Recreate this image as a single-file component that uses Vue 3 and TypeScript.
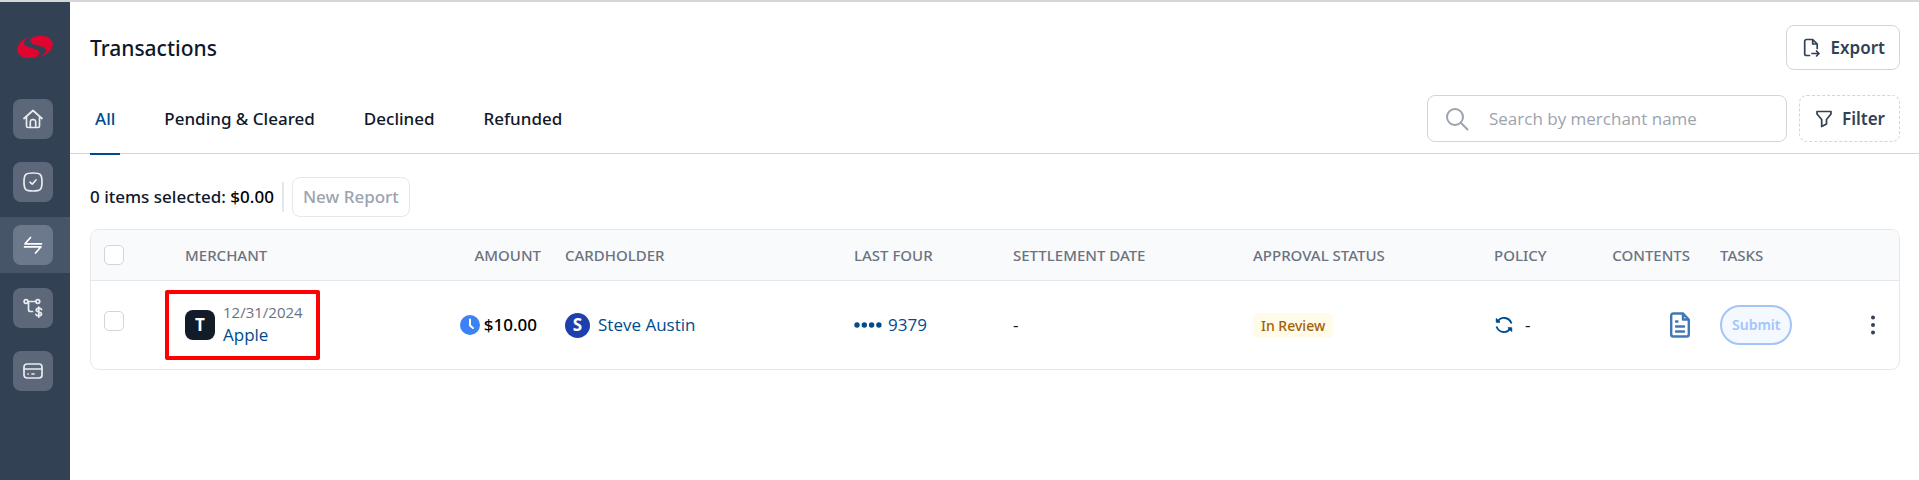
<script setup lang="ts">
const tabs = ['All', 'Pending & Cleared', 'Declined', 'Refunded']
const navItems = [
  { id: 'home', label: 'Home' },
  { id: 'tasks', label: 'Tasks' },
  { id: 'transactions', label: 'Transactions' },
  { id: 'budgets', label: 'Budgets' },
  { id: 'cards', label: 'Cards' },
]
</script>

<template>
  <div class="shell">
    <div class="strip"></div>
    <div class="body">
      <nav class="sidebar" aria-label="Main">
        <a href="#" class="logo" aria-label="Home page">
          <svg width="36" height="24" viewBox="51 105 108 72" fill="#e0052f">
            <path d="M99 108C70 114 52 131 52 149C52 166 70 174 88 174C106 174 118 167 118 158C118 150 106 146 92 143C79 140 72 136 72 129C72 121 82 113 99 108Z" />
            <path d="M110 173C139 168 158 151 158 133C158 116 142 107 122 107C105 107 91 114 91 122C91 130 103 134 117 137C130 140 138 144 138 151C138 159 127 168 110 173Z" />
          </svg>
        </a>
        <a v-for="item in navItems" :key="item.id" href="#" class="nav-item" :class="{ active: item.id === 'transactions' }" :aria-label="item.label">
          <span class="nav-box">
            <svg width="20" height="20" viewBox="0 0 20 20" fill="none" stroke="#e9ecf0" stroke-width="1.7" stroke-linecap="round" stroke-linejoin="round">
              <template v-if="item.id === 'home'">
                <path d="M1 9.5L10 1.5L19 9.5M3.5 8V17a1.5 1.5 0 0 0 1.5 1.5H15a1.5 1.5 0 0 0 1.5-1.5V8M7.3 18.5V12.5A2 2 0 0 1 9.3 10.7H10.7A2 2 0 0 1 12.7 12.5V18.5" />
              </template>
              <template v-else-if="item.id === 'tasks'">
                <path d="M10 1C17.5 1 19 2.500 19 10S17.500 19 10 19S1 17.500 1 10S2.500 1 10 1Z" />
                <path d="M7 10.200L9.200 12.200L13 8" />
              </template>
              <template v-else-if="item.id === 'transactions'">
                <path d="M18.500 8.800H2L7.500 2.500M1.500 11.800H18L12.500 18" stroke="#fff" />
              </template>
              <template v-else-if="item.id === 'budgets'">
                <circle cx="3" cy="3.500" r="1.900" /><circle cx="14.800" cy="3.500" r="1.900" />
                <path d="M5 3.500H12.800M5.500 3.500V11.500Q5.500 13.500 7.500 13.500H9.500" />
                <path d="M18.500 11.500C18 10.500 17 10.200 15.700 10.200C14.200 10.200 13.200 10.900 13.200 12.100C13.200 14.800 18.500 13.300 18.500 16C18.500 17.200 17.300 17.900 15.800 17.900C14.300 17.900 13.300 17.400 12.900 16.400M15.800 9V19.200" />
              </template>
              <template v-else>
                <rect x="1" y="3" width="18" height="14" rx="3" />
                <path d="M1 8H19M5 13H5.200M9 13H11" />
              </template>
            </svg>
          </span>
        </a>
      </nav>

      <main class="main">
        <header class="page-head">
          <h1>Transactions</h1>
          <button type="button" class="btn">
            <svg width="18" height="20" viewBox="0 0 18 20" fill="none" stroke="currentColor" stroke-width="1.700" stroke-linecap="round" stroke-linejoin="round">
              <path d="M6.500 17.500H3.500A1.800 1.800 0 0 1 1.700 15.700V3.300A1.800 1.800 0 0 1 3.500 1.500H9.700L14.200 6V10.500M9.700 1.500V6H14.200M9 15.500H16M13.500 13L16 15.500L13.500 18" />
            </svg>
            Export
          </button>
        </header>

        <div class="toolbar">
          <div class="tabs" role="tablist">
            <button v-for="(tab, i) in tabs" :key="tab" type="button" role="tab" class="tab" :class="{ current: i === 0 }" :aria-selected="i === 0">{{ tab }}</button>
          </div>
          <div class="tools">
            <label class="search">
              <svg width="24" height="24" viewBox="0 0 24 24" fill="none" stroke="#9ca3af" stroke-width="2" stroke-linecap="round">
                <circle cx="10" cy="10" r="8" /><path d="M16 16L22.500 22.500" />
              </svg>
              <input type="text" placeholder="Search by merchant name" aria-label="Search by merchant name" />
            </label>
            <button type="button" class="btn dashed">
              <svg width="16" height="18" viewBox="0 0 16 18" fill="none" stroke="currentColor" stroke-width="1.700" stroke-linejoin="round">
                <path d="M1 1.500H15V4L10.500 9.500V14L5.700 16.500V9.500L1 4Z" />
              </svg>
              Filter
            </button>
          </div>
        </div>

        <section class="content">
          <div class="selection">
            <span>0 items selected: <b>$0.00</b></span>
            <span class="divider"></span>
            <button type="button" class="report" disabled>New Report</button>
          </div>

          <div class="table-card">
            <table>
              <colgroup>
                <col class="c-check" /><col class="c-merchant" /><col class="c-amount" /><col class="c-holder" /><col class="c-four" />
                <col class="c-date" /><col class="c-status" /><col class="c-policy" /><col class="c-contents" /><col class="c-tasks" /><col class="c-menu" />
              </colgroup>
              <thead>
                <tr>
                  <th><input type="checkbox" aria-label="Select all" /></th>
                  <th>Merchant</th>
                  <th class="right">Amount</th>
                  <th>Cardholder</th>
                  <th>Last four</th>
                  <th>Settlement date</th>
                  <th>Approval status</th>
                  <th>Policy</th>
                  <th class="right contents">Contents</th>
                  <th>Tasks</th>
                  <th></th>
                </tr>
              </thead>
              <tbody>
                <tr>
                  <td class="check"><input type="checkbox" aria-label="Select Apple" /></td>
                  <td>
                    <div class="merchant">
                      <span class="tile">T</span>
                      <div class="merchant-text">
                        <span class="date">12/31/2024</span>
                        <a href="#">Apple</a>
                      </div>
                    </div>
                  </td>
                  <td>
                    <div class="amount">
                      <svg width="20" height="20" viewBox="0 0 20 20"><circle cx="10" cy="10" r="10" fill="#3b82f6" /><path d="M10 4.500V10.500L13 13" fill="none" stroke="#fff" stroke-width="2" stroke-linecap="round" stroke-linejoin="round" /></svg>
                      $10.00
                    </div>
                  </td>
                  <td><div class="holder"><span class="avatar">S</span><a href="#">Steve Austin</a></div></td>
                  <td>
                    <a href="#" class="four">
                      <svg width="28" height="6" viewBox="0 0 28 6" fill="currentColor"><circle cx="3" cy="3" r="2.700" /><circle cx="10.300" cy="3" r="2.700" /><circle cx="17.600" cy="3" r="2.700" /><circle cx="24.900" cy="3" r="2.700" /></svg>
                      9379
                    </a>
                  </td>
                  <td>-</td>
                  <td><span class="badge">In Review</span></td>
                  <td>
                    <div class="policy">
                      <svg width="18" height="18" viewBox="0 0 18 18" fill="none" stroke="#004b8d" stroke-width="1.800">
                        <path d="M3 5.500C5.500 .5 14 .5 16.500 7.500M15 12.500C12.500 17.500 4 17.500 1.500 10.500" />
                        <path d="M1.300 2.500V6.200H5ZM16.700 15.500V11.800H13Z" fill="#004b8d" stroke-width="1" />
                      </svg>
                      -
                    </div>
                  </td>
                  <td class="contents">
                    <a href="#" class="doc" aria-label="View contents">
                      <svg width="20" height="26" viewBox="0 0 20 26" fill="none" stroke="#4078b5" stroke-width="2.400" stroke-linecap="round" stroke-linejoin="round">
                        <path d="M13 1.500H3.200A2 2 0 0 0 1.200 3.500V22.500A2 2 0 0 0 3.200 24.500H16.800A2 2 0 0 0 18.800 22.500V7.500ZM13 1.500V7.500H18.500M6 9.500H7.500M6 14.500H14M6 19.500H14" />
                      </svg>
                    </a>
                  </td>
                  <td><button type="button" class="submit" disabled>Submit</button></td>
                  <td>
                    <button type="button" class="menu" aria-label="More actions">
                      <svg width="4" height="20" viewBox="0 0 4 20" fill="#374151"><circle cx="2" cy="2.500" r="2" /><circle cx="2" cy="10" r="2" /><circle cx="2" cy="17.500" r="2" /></svg>
                    </button>
                  </td>
                </tr>
              </tbody>
            </table>
          </div>
        </section>
      </main>
    </div>
  </div>
</template>

<style>
body {
  margin: 0;
  background: #fff;
}
</style>

<style scoped>
.shell {
  display: flex;
  flex-direction: column;
  min-height: 100vh;
  font-family: "Open Sans", "Noto Sans", sans-serif;
  font-size: 17px;
  line-height: 24px;
  color: #0f172a;
}
.shell, .shell *, .shell *::after { box-sizing: border-box; }
svg { display: block; flex: none; }
button, input { font: inherit; }
a { color: #004b8d; text-decoration: none; }
.strip { height: 2px; background: #d6d6d6; }
.body { display: flex; flex: 1; }
.sidebar {
  width: 70px;
  flex: none;
  background: #334155;
  display: flex;
  flex-direction: column;
  gap: 7px;
}
.logo { padding: 33px 17px 25px; }
.nav-item { height: 56px; padding: 8px 17px 8px 13px; }
.nav-item.active { background: #475569; }
.nav-box {
  display: flex;
  align-items: center;
  justify-content: center;
  height: 40px;
  border-radius: 8px;
  background: #5c6779;
}
.active .nav-box { background: #6c788b; }
.main { flex: 1; min-width: 0; }
.page-head {
  display: flex;
  align-items: center;
  justify-content: space-between;
  padding: 23px 19px 0 20px;
}
h1, .tab, .selection, .report, th, .amount, .badge {
  font-family: "Noto Sans", "Open Sans", sans-serif;
  font-weight: 500;
}
h1 { margin: 0; font-size: 21px; line-height: 28px; }
.btn {
  display: flex;
  align-items: center;
  gap: 10px;
  height: 45px;
  padding: 0 14px 0 16px;
  border: 1px solid #d1d5db;
  border-radius: 8px;
  background: #fff;
  color: #334155;
  font-family: "Noto Sans", "Open Sans", sans-serif;
  font-weight: 600;
}
.toolbar {
  display: flex;
  justify-content: space-between;
  height: 84px;
  padding: 0 19px 0 20px;
  border-bottom: 1px solid #d1d5db;
}
.tabs { display: flex; gap: 39px; align-self: stretch; }
.tab {
  height: 85px;
  padding: 14px 5px 0;
  border: 0;
  border-bottom: 2px solid transparent;
  background: none;
  color: #0f172a;
}
.tab.current { color: #004b8d; border-color: #004b8d; }
.tools { display: flex; gap: 12px; padding-top: 25px; }
.search {
  display: flex;
  align-items: center;
  gap: 20px;
  width: 360px;
  height: 47px;
  padding: 0 17px;
  border: 1px solid #d1d5db;
  border-radius: 8px;
}
.search input {
  flex: 1;
  min-width: 0;
  padding: 0;
  border: 0;
  outline: 0;
  background: none;
}
.search input::placeholder { color: #9ca3af; opacity: 1; }
.btn.dashed { height: 47px; border-style: dashed; }
.content { padding: 23px 19px 0 20px; }
.selection { display: flex; align-items: center; gap: 8px; }
.selection b { font-weight: 500; color: #000; }
.divider { width: 2px; height: 30px; background: #e2e8f0; }
.report {
  height: 40px;
  padding: 0 10px;
  border: 1px solid #e5e7eb;
  border-radius: 8px;
  background: #fff;
  color: #9ca3af;
}
.table-card {
  margin-top: 12px;
  border: 1px solid #e5e7eb;
  border-radius: 9px;
  overflow: hidden;
}
table { width: 100%; table-layout: fixed; border-collapse: separate; border-spacing: 0; }
th {
  height: 51px;
  padding: 0 12px;
  background: #f9fafb;
  border-bottom: 1px solid #e5e7eb;
  font-size: 15px;
  color: #6b7280;
  text-align: left;
  text-transform: uppercase;
  white-space: nowrap;
}
td { height: 88px; padding: 0 12px; white-space: nowrap; }
th:first-child, td:first-child { padding-left: 13px; }
.right { text-align: right; }
.contents { padding-right: 18px; }
.c-check { width: 82px; }
.c-merchant { width: 270px; }
.c-amount { width: 110px; }
.c-holder { width: 289px; }
.c-four { width: 159px; }
.c-date { width: 240px; }
.c-status { width: 241px; }
.c-policy { width: 113px; }
.c-contents { width: 113px; }
.c-tasks { width: 143px; }
.c-menu { width: 48px; }
input[type="checkbox"] {
  appearance: none;
  display: block;
  width: 20px;
  height: 20px;
  margin: 0;
  border: 1px solid #d1d5db;
  border-radius: 5px;
  background: #fff;
}
td.check { padding-bottom: 8px; }
.merchant { position: relative; display: flex; align-items: center; gap: 8px; }
.merchant::after {
  content: "";
  position: absolute;
  left: -20px;
  top: -11px;
  width: 155px;
  height: 70px;
  border: 4px solid #f00;
  border-radius: 2px;
}
.tile {
  display: grid;
  place-items: center;
  width: 30px;
  height: 30px;
  border-radius: 8px;
  background: #111c28;
  color: #fff;
  font-weight: 700;
}
.merchant-text { display: flex; flex-direction: column; padding-bottom: 2px; }
.date { font-size: 15px; line-height: 22px; color: #6b7280; }
.amount { display: flex; align-items: center; justify-content: flex-end; gap: 4px; padding-right: 4px; color: #000; }
.holder { display: flex; align-items: center; gap: 8px; }
.avatar {
  display: grid;
  place-items: center;
  width: 25px;
  height: 25px;
  border-radius: 50%;
  background: #1e40af;
  color: #fff;
  font-weight: 700;
}
.four { display: flex; align-items: center; gap: 6px; }
.badge {
  display: inline-block;
  padding: 0 8px;
  border-radius: 5px;
  background: #fffbe8;
  color: #a16207;
  font-size: 14px;
  line-height: 25px;
}
.policy { display: flex; align-items: center; gap: 12px; padding-left: 1px; }
.doc { display: flex; justify-content: flex-end; }
.submit {
  height: 40px;
  padding: 0 10px;
  border: 2px solid #a3c4fb;
  border-radius: 20px;
  background: #f4f8ff;
  color: #a3c4fb;
  font-family: "Noto Sans", "Open Sans", sans-serif;
  font-size: 14px;
  font-weight: 600;
}
.menu { display: block; padding: 4px 8px; border: 0; background: none; }
</style>
